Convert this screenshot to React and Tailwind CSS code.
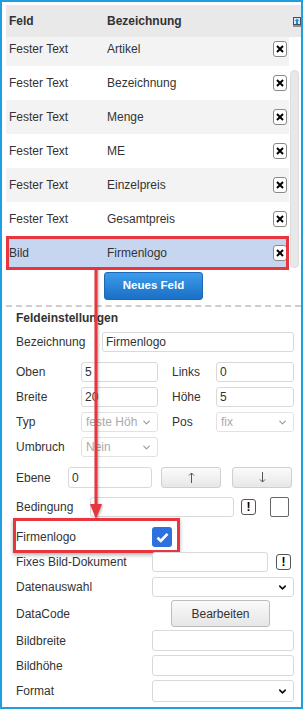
import { ChevronDown } from "lucide-react";

const rows = [
  ["Fester Text", "Artikel"],
  ["Fester Text", "Bezeichnung"],
  ["Fester Text", "Menge"],
  ["Fester Text", "ME"],
  ["Fester Text", "Einzelpreis"],
  ["Fester Text", "Gesamtpreis"],
  ["Bild", "Firmenlogo"],
];

function ExportIcon() {
  return (
    <svg width="8" height="10" viewBox="0 0 8 10" className="mt-[1px] shrink-0">
      <rect x="0.5" y="0.5" width="7" height="7" fill="#dfe6ee" stroke="#4a4f57" />
      <path d="M4 1.5L6.3 4H5v3H3V4H1.7z" fill="#1b8be8" />
      <rect x="0" y="8" width="8" height="2" fill="#8c9096" />
    </svg>
  );
}

function DelButton() {
  return (
    <span className="flex h-[16px] w-[14px] shrink-0 items-center justify-center rounded-[3px] border border-[#8a8a8a] bg-white">
      <svg width="8" height="8" viewBox="0 0 8 8">
        <path d="M1 1L7 7M7 1L1 7" stroke="#000" strokeWidth="2" />
      </svg>
    </span>
  );
}

function Field({ className, value }) {
  return (
    <div
      className={
        "flex h-full shrink-0 items-center overflow-hidden whitespace-nowrap rounded-[3px] border border-[#d9d9d9] bg-white pl-[3px] " +
        className
      }
    >
      {value}
    </div>
  );
}

function Select({ className, value, disabled }) {
  return (
    <div
      className={
        "flex h-full shrink-0 items-center rounded-[3px] border bg-white pl-[4px] pr-[5px] " +
        (disabled ? "border-[#e2e2e2] text-[#aaa] " : "border-[#d9d9d9] text-[#333] ") +
        className
      }
    >
      <span className="flex-1 whitespace-nowrap">{value}</span>
      <ChevronDown
        size={11}
        strokeWidth={disabled ? 2.5 : 3.5}
        color={disabled ? "#9a9a9a" : "#111"}
        className="ml-[2px] shrink-0"
      />
    </div>
  );
}

function BangButton({ className }) {
  return (
    <span
      className={
        "flex h-[16px] w-[15px] shrink-0 items-center justify-center rounded-[3px] border border-[#555] bg-white text-[12px] font-bold text-black " +
        className
      }
    >
      !
    </span>
  );
}

function ArrowButton({ up, className }) {
  return (
    <button
      className={
        "flex h-full w-[60px] shrink-0 items-center justify-center rounded-[3px] border border-[#cfcfcf] bg-gradient-to-b from-[#fbfbfb] to-[#e7e7e7] " +
        className
      }
    >
      <svg width="7" height="11" viewBox="0 0 7 11" className={up ? "" : "rotate-180"}>
        <path d="M3.5 1V11M1 3.5L3.5 1L6 3.5" stroke="#555" strokeWidth="1" fill="none" />
      </svg>
    </button>
  );
}

export default function App() {
  return (
    <div className="relative h-[709px] w-[303px] overflow-hidden border-2 border-[#1f9fe0] bg-white font-['Liberation_Sans',Arial,sans-serif] text-[12px] text-[#333]">
      {/* Tabelle */}
      <div className="ml-[4px] mt-[3px] w-[295px]">
        <div className="flex h-[32px] items-center bg-[#e9e9e9] font-bold">
          <div className="w-[101px] pl-[3px]">Feld</div>
          <div className="flex-1">Bezeichnung</div>
          <ExportIcon />
        </div>
        <div className="flex h-[233px]">
          <div className="w-[283px] overflow-hidden">
            <div className="-mt-[5px]">
              {rows.map(([feld, bez], i) => {
                const selected = i === rows.length - 1;
                return (
                  <div
                    key={i}
                    className={
                      "flex h-[34px] items-center pr-[2px] " +
                      (selected
                        ? "bg-[#c6d6f1] outline-3 -outline-offset-3 outline-[#e8363e]"
                        : i % 2 === 0
                        ? "bg-[#f3f3f3]"
                        : "bg-white")
                    }
                  >
                    <div className="w-[101px] pl-[3px]">{feld}</div>
                    <div className="flex-1">{bez}</div>
                    <DelButton />
                  </div>
                );
              })}
            </div>
          </div>
          <div className="ml-[1px] w-[9px] pb-[2px] pt-[33px]">
            <div className="h-full rounded-full border border-[#dcdcdc] bg-[#e8e8e8]" />
          </div>
        </div>
      </div>

      <button className="ml-[102px] mt-[2px] flex h-[28px] w-[99px] items-center justify-center rounded-[3px] border border-[#1c68b8] bg-gradient-to-b from-[#3c9cea] to-[#1a6fc6] text-[11.5px] font-bold text-white">
        Neues Feld
      </button>

      <div className="ml-[4px] mt-[5px] w-[295px] border-t-2 border-dashed border-[#cdcdcd]" />

      {/* Feldeinstellungen */}
      <div className="flex flex-col pl-[14px]">
        <div className="mt-[4px] font-bold leading-[14px]">Feldeinstellungen</div>

        <div className="mt-[7px] flex h-[20px] items-center">
          <span className="w-[86px] shrink-0">Bezeichnung</span>
          <Field className="w-[192px]" value="Firmenlogo" />
        </div>

        <div className="mt-[10px] flex h-[20px] items-center">
          <span className="w-[65px] shrink-0">Oben</span>
          <Field className="w-[77px]" value="5" />
          <span className="ml-[14px] w-[44px] shrink-0">Links</span>
          <Field className="w-[78px]" value="0" />
        </div>

        <div className="mt-[5px] flex h-[20px] items-center">
          <span className="w-[65px] shrink-0">Breite</span>
          <Field className="w-[77px]" value="20" />
          <span className="ml-[14px] w-[44px] shrink-0">Höhe</span>
          <Field className="w-[78px]" value="5" />
        </div>

        <div className="mt-[5px] flex h-[20px] items-center">
          <span className="w-[65px] shrink-0">Typ</span>
          <Select className="w-[77px]" value="feste Höh" disabled />
          <span className="ml-[14px] w-[44px] shrink-0">Pos</span>
          <Select className="w-[78px]" value="fix" disabled />
        </div>

        <div className="mt-[5px] flex h-[20px] items-center">
          <span className="w-[65px] shrink-0">Umbruch</span>
          <Select className="w-[77px]" value="Nein" disabled />
        </div>

        <div className="mt-[10px] flex h-[21px] items-center">
          <span className="w-[52px] shrink-0">Ebene</span>
          <Field className="w-[84px]" value="0" />
          <ArrowButton up className="ml-[9px]" />
          <ArrowButton className="ml-[11px]" />
        </div>

        <div className="mt-[9px] flex h-[20px] items-center">
          <span className="w-[74px] shrink-0">Bedingung</span>
          <Field className="w-[144px]" value="" />
          <BangButton className="ml-[7px]" />
          <span className="ml-[14px] h-[20px] w-[19px] shrink-0 rounded-[2px] border border-[#666] bg-white" />
        </div>

        <div className="-ml-[3px] mt-[1px] w-[167px] border-3 border-[#e8363e] pb-[3px] pt-[6px] shadow-[0_2px_4px_rgba(0,0,0,0.3)]">
          <div className="flex h-[20px] items-center">
            <span className="w-[136px] shrink-0">Firmenlogo</span>
            <span className="flex h-[20px] w-[20px] items-center justify-center rounded-[3px] bg-[#2f70df]">
              <svg width="13" height="11" viewBox="0 0 13 11">
                <path d="M1.5 5.8L4.8 9L11.5 1.8" stroke="#fff" strokeWidth="2.6" fill="none" />
              </svg>
            </span>
          </div>
        </div>

        <div className="-mt-[1px] flex h-[20px] items-center">
          <span className="w-[136px] shrink-0">Fixes Bild-Dokument</span>
          <Field className="w-[116px]" value="" />
          <BangButton className="ml-[8px]" />
        </div>

        <div className="mt-[5px] flex h-[20px] items-center">
          <span className="w-[136px] shrink-0">Datenauswahl</span>
          <Select className="w-[142px]" value="" />
        </div>

        <div className="mt-[3px] flex h-[27px] items-center">
          <span className="w-[155px] shrink-0">DataCode</span>
          <button className="h-full w-[99px] rounded-[3px] border border-[#bdbdbd] bg-gradient-to-b from-[#fafafa] to-[#e6e6e6] text-[#333]">
            Bearbeiten
          </button>
        </div>

        <div className="mt-[3px] flex h-[21px] items-center">
          <span className="w-[136px] shrink-0">Bildbreite</span>
          <Field className="w-[142px]" value="" />
        </div>

        <div className="mt-[4px] flex h-[21px] items-center">
          <span className="w-[136px] shrink-0">Bildhöhe</span>
          <Field className="w-[142px]" value="" />
        </div>

        <div className="mt-[4px] flex h-[22px] items-center">
          <span className="w-[136px] shrink-0">Format</span>
          <Select className="w-[142px]" value="" />
        </div>
      </div>

      {/* Markierungspfeil */}
      <svg
        width="14"
        height="252"
        viewBox="0 0 14 252"
        className="absolute left-[87px] top-[266px] drop-shadow-[1px_1px_1px_rgba(0,0,0,0.3)]"
      >
        <path d="M7 0V238" stroke="#e8363e" strokeWidth="3" />
        <path d="M1 236H13L7 251z" fill="#e8363e" />
      </svg>
    </div>
  );
}
